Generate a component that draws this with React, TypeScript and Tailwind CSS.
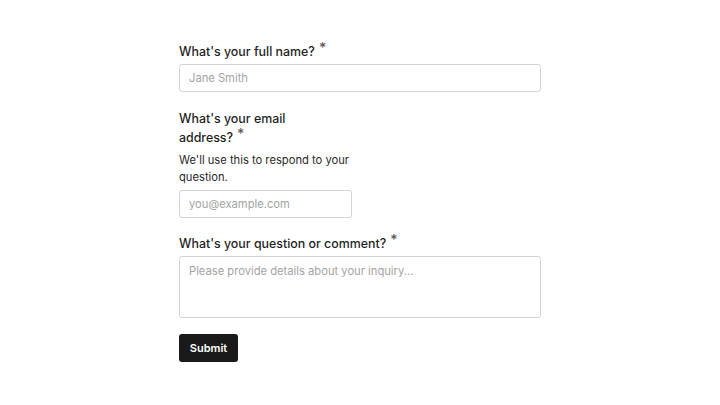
import React from "react";

function Req() {
  return <span className="relative top-[-3px] ml-[4px] text-[14px] leading-[0] text-[#5c5c5c]">*</span>;
}

export default function App() {
  return (
    <div className="min-h-[405px] bg-white" style={{ fontFamily: "Inter, 'Noto Sans', sans-serif" }}>
      <form className="mx-auto flex w-[362px] flex-col pt-[42px] text-[#1f1f1f]">
        <div className="flex flex-col">
          <label className="text-[12.4px] leading-[19px] font-medium">
            What's your full name?<Req />
          </label>
          <input
            className="mt-[3px] h-[28px] rounded-[3px] border border-[#d4d4d4] px-[9px] text-[11.2px] placeholder:text-[#a3a3a3] outline-none"
            placeholder="Jane Smith"
          />
        </div>
        <div className="mt-[17px] flex w-[173px] flex-col">
          <label className="w-[150px] text-[12.4px] leading-[19px] font-medium">
            What's your email <span className="whitespace-nowrap">address?<Req /></span>
          </label>
          <p className="mt-[5px] text-[11.2px] leading-[17px] text-[#2a2a2a]">
            We'll use this to respond to your question.
          </p>
          <input
            className="mt-[4px] h-[28px] rounded-[3px] border border-[#d4d4d4] px-[9px] text-[11.2px] placeholder:text-[#a3a3a3] outline-none"
            placeholder="you@example.com"
          />
        </div>
        <div className="mt-[16px] flex flex-col">
          <label className="text-[12.4px] leading-[19px] font-medium">
            What's your question or comment?<Req />
          </label>
          <textarea
            className="mt-[3px] h-[62px] resize-none rounded-[3px] border border-[#d4d4d4] px-[9px] py-[6px] text-[11.2px] placeholder:text-[#a3a3a3] outline-none"
            placeholder="Please provide details about your inquiry..."
          />
        </div>
        <div className="mt-[16px]">
          <button
            type="button"
            className="h-[28px] w-[59px] rounded-[3px] bg-[#1a1a1a] text-[11px] font-semibold text-white"
          >
            Submit
          </button>
        </div>
      </form>
    </div>
  );
}
